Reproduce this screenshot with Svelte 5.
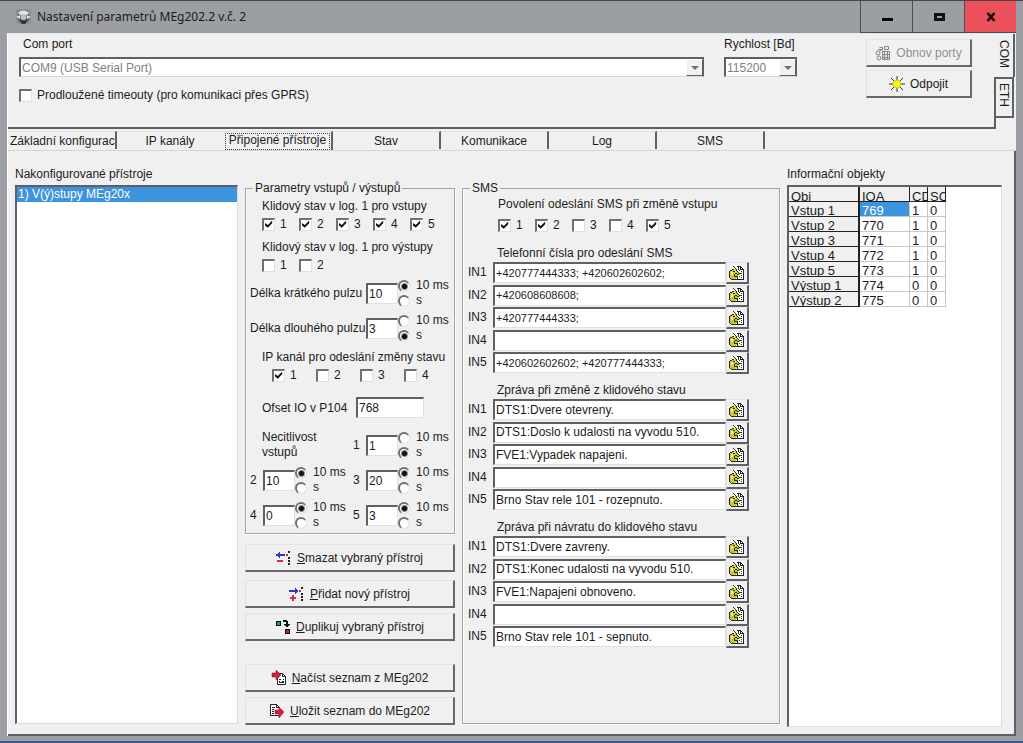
<script>
	const tabs = ['Základní konfigurace', 'IP kanály', 'Připojené přístroje', 'Stav', 'Komunikace', 'Log', 'SMS'];
	let activeTab = $state(2);

	let longTimeouts = $state(false);
	let offset = $state('768');

	let inputIdle = $state([true, true, true, true, true]);
	let outputIdle = $state([false, false]);
	let ipChannels = $state([true, false, false, false]);
	let smsEnabled = $state([true, true, false, false, true]);

	let shortPulse = $state({ value: '10', unit: 'ms' });
	let longPulse = $state({ value: '3', unit: 's' });
	let deadTimes = $state([
		{ value: '1', unit: 's' },
		{ value: '10', unit: 'ms' },
		{ value: '20', unit: 'ms' },
		{ value: '0', unit: 'ms' },
		{ value: '3', unit: 'ms' }
	]);

	const units = [
		['ms', '10 ms'],
		['s', 's']
	];

	let smsGroups = $state([
		{
			id: 'phone',
			title: 'Telefonní čísla pro odeslání SMS',
			rows: ['+420777444333; +420602602602;', '+420608608608;', '+420777444333;', '', '+420602602602; +420777444333;']
		},
		{
			id: 'change',
			title: 'Zpráva při změně z klidového stavu',
			rows: ['DTS1:Dvere otevreny.', 'DTS1:Doslo k udalosti na vyvodu 510.', 'FVE1:Vypadek napajeni.', '', 'Brno Stav rele 101 - rozepnuto.']
		},
		{
			id: 'return',
			title: 'Zpráva při návratu do klidového stavu',
			rows: ['DTS1:Dvere zavreny.', 'DTS1:Konec udalosti na vyvodu 510.', 'FVE1:Napajeni obnoveno.', '', 'Brno Stav rele 101 - sepnuto.']
		}
	]);

	const objects = [
		['Vstup 1', 769, 1, 0],
		['Vstup 2', 770, 1, 0],
		['Vstup 3', 771, 1, 0],
		['Vstup 4', 772, 1, 0],
		['Vstup 5', 773, 1, 0],
		['Výstup 1', 774, 0, 0],
		['Výstup 2', 775, 0, 0]
	];
</script>

{#snippet checks(list, kind)}
	<div class="checks {kind}">
		{#each list as checked, i}
			<label><input type="checkbox" {checked} onchange={() => (list[i] = !list[i])} />{i + 1}</label>
		{/each}
	</div>
{/snippet}

{#snippet duration(item, id, text)}
	<div class="duration">
		<label class="duration-name" for={id}>{text}</label>
		<input class="field short" {id} type="text" value={item.value} oninput={(e) => (item.value = e.currentTarget.value)} />
		<div class="units">
			{#each units as [unit, name] (unit)}
				<label>
					<input type="radio" name="{id}-unit" value={unit} checked={item.unit === unit} onchange={() => (item.unit = unit)} />
					{name}
				</label>
			{/each}
		</div>
	</div>
{/snippet}

{#snippet editIcon()}
	<svg width="16" height="16" viewBox="0 0 16 16" shape-rendering="crispEdges">
		<path d="M7 1h5l3 3v11H7z" fill="#fff" />
		<path d="M8 1h4v1H8zM12 2h1v1h-1zM13 3h1v1h-1zM14 4h1v11h-1zM11 2h1v3h-1zM12 4h2v1h-2zM7 14h8v1H7z" fill="#222" />
		<path d="M10 5h1v1h-1zM12 6h1v1h-1zM11 8h2v1h-2zM12 10h1v1h-1zM10 11h1v1h-1zM12 12h1v1h-1z" fill="#333" />
		<path d="M1 6h2V5h3V4h2v3h2v2h1v1H9v3H7v1H2v-1H1z" fill="#c8c832" />
		<path d="M0 6h1v7H0zM1 5h2v1H1zM3 4h2v1H3zM1 13h1v1H1zM2 14h6v1H2zM8 12h1v2H8zM4 1h1v1H4zM5 2h1v1H5zM6 3h1v1H6zM7 4h1v2H7zM8 6h1v1H8zM9 7h1v1H9zM10 8h1v1h-1zM10 9h-2v1h2zM6 8h2v1H6zM6 11h3v1H6zM9 2h1v3H9zM5 9h1v3H5zM4 6h2v1H4z" fill="#2c2c10" />
		<path d="M2 7h2v3H2zM6 6h1v1H6z" fill="#f4f478" />
	</svg>
{/snippet}

<div class="window">
	<header class="titlebar">
		<svg class="app-icon" width="18" height="18" viewBox="0 0 18 18">
			<rect x="1" y="1" width="15" height="15" rx="3" fill="#8a8c8e" />
			<circle cx="8.500" cy="9" r="6" fill="#4b5258" />
			<path d="M3 5q5-5 11 0l-2 2H5z" fill="#e0e3e5" />
			<path d="M1 9l4-2v4zM16 9l-4-2v4z" fill="#dde1e4" />
			<circle cx="8.500" cy="9" r="3" fill="#b8c0c4" />
			<path d="M5 13h7l-2 3H7z" fill="#2c3236" />
		</svg>
		<h1>Nastavení parametrů MEg202.2 v.č. 2</h1>
		<div class="window-buttons">
			<button type="button" aria-label="Minimalizovat">
				<svg width="12" height="12" viewBox="0 0 12 12"><path d="M1 7h11v3H1z" /></svg>
			</button>
			<button type="button" aria-label="Maximalizovat">
				<svg width="12" height="12" viewBox="0 0 12 12"><path d="M2.500 3.500h8v5h-8z" fill="none" stroke="#111" stroke-width="3" /></svg>
			</button>
			<button type="button" class="close" aria-label="Zavřít">
				<svg width="12" height="12" viewBox="0 0 12 12"><path d="M2.500 2l7 8M9.500 2l-7 8" stroke="#111" stroke-width="2.600" /></svg>
			</button>
		</div>
	</header>

	<main>
		<section class="connection">
			<div class="connection-body">
				<div class="port">
					<label for="port">Com port</label>
					<div class="combo">
						<select id="port" disabled><option>COM9 (USB Serial Port)</option></select>
						<span class="arrow"></span>
					</div>
					<label class="timeouts"><input type="checkbox" bind:checked={longTimeouts} />Prodloužené timeouty (pro komunikaci přes GPRS)</label>
				</div>
				<div class="speed">
					<label for="speed">Rychlost [Bd]</label>
					<div class="combo">
						<select id="speed" disabled><option>115200</option></select>
						<span class="arrow"></span>
					</div>
				</div>
				<div class="connection-buttons">
					<button type="button" class="push" disabled>
						<svg width="16" height="16" viewBox="0 0 16 16" fill="none" stroke="#858585">
							<path d="M4.500 2.500h3v3M9.500 1.500h4v3h-4zM3 4.500h4M7.500 6.500h7v8h-7zM9.500 6v9M12.500 6v9M7 9.500h8M7 12.500h8M4 7l4-4" />
							<circle cx="3" cy="8" r="2" /><circle cx="4" cy="13" r="2" />
						</svg>
						Obnov porty
					</button>
					<button type="button" class="push">
						<svg width="16" height="16" viewBox="0 0 16 16">
							<path d="M8 0v4M8 12v4M0 8h4M12 8h4M2 2l3.500 3.500M14 2l-3.500 3.500M2 14l3.500-3.500M14 14l-3.500-3.500" stroke="#3c3c10" />
							<circle cx="8" cy="8" r="3.800" fill="#f8f810" stroke="#c0c000" stroke-width="0.800" />
						</svg>
						Odpojit
					</button>
				</div>
			</div>
			<nav class="side-tabs">
				<button type="button" class="com">COM</button>
				<button type="button" class="eth">ETH</button>
				<span class="side-edge"></span>
			</nav>
		</section>

		<nav class="tabs">
			{#each tabs as tab, i (tab)}
				<button type="button" class:active={activeTab === i} onclick={() => (activeTab = i)}><span>{tab}</span></button>
			{/each}
		</nav>

		<section class="page">
			<div class="devices">
				<h2>Nakonfigurované přístroje</h2>
				<ul class="sunken">
					<li>1) V(ý)stupy MEg20x</li>
				</ul>
			</div>

			<div class="middle">
				<fieldset class="params">
					<legend>Parametry vstupů / výstupů</legend>
					<h3>Klidový stav v log. 1 pro vstupy</h3>
					{@render checks(inputIdle, 'io')}
					<h3 class="spaced">Klidový stav v log. 1 pro výstupy</h3>
					{@render checks(outputIdle, 'io')}
					<div class="pulses">
						{@render duration(shortPulse, 'short-pulse', 'Délka krátkého pulzu')}
						{@render duration(longPulse, 'long-pulse', 'Délka dlouhého pulzu')}
					</div>
					<h3>IP kanál pro odeslání změny stavu</h3>
					{@render checks(ipChannels, 'channels')}
					<div class="offset">
						<label for="offset">Ofset IO v P104</label>
						<input class="field" id="offset" type="text" bind:value={offset} />
					</div>
					<div class="dead-times">
						<p>Necitlivost<br />vstupů</p>
						{#each deadTimes as item, i}
							{@render duration(item, `dead-${i + 1}`, i + 1)}
						{/each}
					</div>
				</fieldset>

				<div class="actions">
					<button type="button" class="push">
						<svg width="16" height="16" viewBox="0 0 16 16" shape-rendering="crispEdges">
							<path d="M0 4h9v2H0zM3 2h1v6H3zM2 3h1v4H2z" fill="#3434c4" />
							<path d="M1 10h6v2H1z" fill="#e02840" />
							<path d="M12 1h2v2h-2zM12 7h2v2h-2zM12 10h2v2h-2zM12 13h2v2h-2z" fill="#222" />
							<path d="M10 4h2v2h-2z" fill="#c03040" />
						</svg>
						<span><u>S</u>mazat vybraný přístroj</span>
					</button>
					<button type="button" class="push">
						<svg width="16" height="16" viewBox="0 0 16 16" shape-rendering="crispEdges">
							<path d="M0 4h9v2H0zM6 2h1v6H6zM7 3h1v4H7z" fill="#3434c4" />
							<path d="M1 11h6v2H1zM3 9h2v6H3z" fill="#e02840" />
							<path d="M12 1h2v2h-2zM12 7h2v2h-2zM12 10h2v2h-2zM12 13h2v2h-2z" fill="#222" />
							<path d="M10 4h2v2h-2z" fill="#c03040" />
						</svg>
						<span><u>P</u>řidat nový přístroj</span>
					</button>
					<button type="button" class="push">
						<svg width="16" height="16" viewBox="0 0 16 16" shape-rendering="crispEdges">
							<path d="M1 2h5v5H1zM10 10h5v5h-5z" fill="#111" />
							<path d="M2 3h3v3H2z" fill="#209a8c" />
							<path d="M11 11h3v3h-3z" fill="#b02838" />
							<path d="M8 1h4v1h1v3h2v1h-1v1h-1v1h-1V8h-1V7h-1V6h-1V5h2V3H8z" fill="#111" />
						</svg>
						<span><u>D</u>uplikuj vybraný přístroj</span>
					</button>
					<button type="button" class="push apart">
						<svg width="16" height="16" viewBox="0 0 16 16">
							<path d="M6.500 3.500h5l3 3v8h-8z" fill="#fff" stroke="#222" />
							<path d="M11.500 3.500v3h3M8 9.500h2M12 9.500h1M8 11.500h1M11 11.500h2M8 12.500h5" stroke="#222" fill="none" />
							<path d="M1 3h4V0l5 5-5 5V7H1z" fill="#dc1c34" stroke="#801020" stroke-width="0.500" />
						</svg>
						<span><u>N</u>ačíst seznam z MEg202</span>
					</button>
					<button type="button" class="push">
						<svg width="16" height="16" viewBox="0 0 16 16">
							<path d="M1.500 1.500h6l3 3v8h-9z" fill="#fff" stroke="#222" />
							<path d="M7.500 1.500v3h3M3 4.500h3M3 6.500h2M3 8.500h2M3 10.500h2" stroke="#222" fill="none" />
							<path d="M6 7h4V4l5 5-5 6v-4H6z" fill="#dc1c34" stroke="#801020" stroke-width="0.500" />
						</svg>
						<span><u>U</u>ložit seznam do MEg202</span>
					</button>
				</div>
			</div>

			<fieldset class="sms">
				<legend>SMS</legend>
				<h3>Povolení odeslání SMS při změně vstupu</h3>
				{@render checks(smsEnabled, 'io')}
				{#each smsGroups as group (group.id)}
					<div class="sms-group">
						<h4>{group.title}</h4>
						<div class="sms-rows">
							{#each group.rows as _, i}
								<div class="sms-row">
									<label for="{group.id}-{i}">IN{i + 1}</label>
									<input class="field" class:digits={group.id === 'phone'} id="{group.id}-{i}" type="text" bind:value={group.rows[i]} />
									<button type="button" class="edit" aria-label="Upravit IN{i + 1}">{@render editIcon()}</button>
								</div>
							{/each}
						</div>
					</div>
				{/each}
			</fieldset>

			<div class="objects">
				<h2>Informační objekty</h2>
				<div class="sunken">
					<table>
						<thead>
							<tr>
								<th class="name"><div>Obj</div></th>
								<th class="ioa"><div>IOA</div></th>
								<th class="flag"><div>CD</div></th>
								<th class="flag"><div>SC</div></th>
							</tr>
						</thead>
						<tbody>
							{#each objects as [name, ioa, cd, sc], i (ioa)}
								<tr>
									<th><div>{name}</div></th>
									<td class:selected={i === 0}><div>{ioa}</div></td>
									<td><div>{cd}</div></td>
									<td><div>{sc}</div></td>
								</tr>
							{/each}
						</tbody>
					</table>
				</div>
			</div>
		</section>
	</main>
</div>

<style>
	:global(body) {
		margin: 0;
	}

	.window {
		box-sizing: border-box;
		min-height: 100vh;
		display: flex;
		flex-direction: column;
		padding: 0 7px 5px;
		background: #9b9ea3;
		border-top: 1px solid #44464c;
		border-bottom: 2px solid #3c5a8c;
		font-family: 'Liberation Sans', Arial, sans-serif;
		font-size: 12px;
		line-height: 16px;
		color: #1c1c1c;
	}

	.window :global(*) {
		box-sizing: border-box;
	}

	button,
	input,
	select {
		font: inherit;
		color: inherit;
		margin: 0;
		border-radius: 0;
	}

	button {
		padding: 0;
		background: #f0f0f0;
	}

	h1,
	h2,
	h3,
	h4,
	p,
	ul {
		margin: 0;
		padding: 0;
		font-size: 12px;
		font-weight: normal;
	}

	/* title bar */
	.titlebar {
		display: flex;
		align-items: center;
		height: 32px;
		padding-left: 8px;
	}

	.titlebar h1 {
		flex: 1;
		padding-left: 4px;
		font-family: 'Noto Sans', 'Open Sans', sans-serif;
		font-size: 12px;
	}

	.window-buttons {
		display: flex;
		align-self: stretch;
	}

	.window-buttons button {
		display: flex;
		align-items: center;
		justify-content: center;
		width: 52px;
		background: #9b9ea3;
		border: 1px solid #4c4e54;
		border-width: 0 0 1px 1px;
	}

	.window-buttons .close {
		background: #ec505a;
	}

	main {
		flex: 1;
		display: flex;
		flex-direction: column;
		background: #f0f0f0;
		border-top: 1px solid #dce8ee;
		border-left: 1px solid #fff;
	}

	/* connection panel */
	.connection {
		display: flex;
		height: 95px;
	}

	.connection-body {
		flex: 1;
		display: flex;
		gap: 20px;
		padding: 2px 22px 0 11px;
		border-bottom: 2px solid #606064;
	}

	.port {
		flex: 1;
	}

	.port > label,
	.speed > label {
		display: block;
		padding-left: 4px;
	}

	.speed {
		width: 73px;
		white-space: nowrap;
	}

	.speed > label {
		padding-left: 0;
	}

	.combo {
		display: flex;
		height: 20px;
		margin-top: 5px;
		background: #fff;
		border: 2px solid #606064;
		border-right-width: 1px;
		border-bottom: 1px solid #d8d8d8;
	}

	.combo select {
		flex: 1;
		min-width: 0;
		padding: 0 1px;
		appearance: none;
		background: #fff;
		border: 0;
		color: #808080;
		opacity: 1;
		font-size: 12px;
		line-height: 16px;
	}

	.arrow {
		display: flex;
		align-items: center;
		justify-content: center;
		width: 17px;
		background: #f0f0f0;
		border: 1px solid #fff;
		border-right-color: #606064;
		border-bottom-color: #606064;
	}

	.arrow::before {
		content: '';
		border: 4px solid transparent;
		border-top-color: #707070;
		border-bottom-width: 0;
	}

	.port .timeouts {
		display: flex;
		align-items: center;
		gap: 5px;
		margin-top: 10px;
		padding-left: 0;
	}

	.connection-buttons {
		display: flex;
		flex-direction: column;
		gap: 3px;
		width: 106px;
		margin: 3px 0 0 49px;
	}

	.push {
		display: flex;
		align-items: center;
		justify-content: center;
		gap: 5px;
		width: 100%;
		height: 28px;
		border: 1px solid #e2e2e2;
		border-right: 2px solid #68686c;
		border-bottom: 2px solid #68686c;
	}

	.push:disabled {
		color: #909090;
	}

	.side-tabs {
		display: flex;
		flex-direction: column;
		width: 22px;
	}

	.side-tabs button {
		width: 21px;
		height: 41px;
		writing-mode: vertical-rl;
		line-height: 16px;
		font-size: 12px;
		border: 0;
		border-right: 2px solid #606064;
	}

	.side-tabs .com {
		height: 43px;
		padding-bottom: 4px;
	}

	.side-tabs .eth {
		width: 20px;
		padding-bottom: 6px;
		border: 2px solid #606064;
	}

	.side-edge {
		flex: 1;
		border-left: 2px solid #606064;
	}

	/* page tabs */
	.tabs {
		display: flex;
		height: 22px;
		padding: 2px 0 0 1px;
		border-bottom: 1px solid #d4d4d4;
	}

	.tabs button {
		width: 108px;
		height: 18px;
		overflow: hidden;
		white-space: nowrap;
		border: 0;
		border-top: 1px solid #e2e2e2;
		border-right: 2px solid #606064;
	}

	.tabs button:first-child {
		text-align: left;
		padding-left: 1px;
	}

	.tabs button:nth-child(2) {
		border-right-color: #f0f0f0;
	}

	.tabs .active {
		height: 19px;
	}

	.tabs .active span {
		display: block;
		margin-right: 1px;
		padding-bottom: 2px;
		line-height: 15px;
		outline: 1px dotted #444;
		outline-offset: -1px;
	}

	.page {
		flex: 1;
		display: grid;
		grid-template-columns: 223px 210px 1fr 215px;
		gap: 7px;
		padding: 13px 12px 7px 7px;
		border-right: 2px solid #606064;
		border-bottom: 2px solid #606064;
	}

	.devices,
	.objects {
		display: flex;
		flex-direction: column;
	}

	.devices {
		padding-bottom: 3px;
	}

	h2 {
		height: 21px;
		line-height: 20px;
	}

	.sunken {
		flex: 1;
		background: #fff;
		border: 1px solid #dcdcdc;
		border-top: 2px solid #606064;
		border-left: 2px solid #606064;
	}

	.sunken li {
		list-style: none;
		padding-left: 1px;
		line-height: 15px;
		color: #fff;
		background: #3c94dc;
	}

	/* group boxes */
	.middle {
		padding-top: 17px;
	}

	fieldset {
		min-width: 0;
		margin: 0;
		padding: 0 4px;
		border: 1px solid #a4a4a8;
		box-shadow:
			1px 1px 0 #fff,
			inset 1px 0 0 #fff;
	}

	legend {
		margin-left: 3px;
		padding: 0 2px;
		line-height: 14px;
		white-space: nowrap;
	}

	.params h3 {
		margin-top: 3px;
		padding-left: 12px;
		white-space: nowrap;
	}

	.params .spaced {
		margin-top: 8px;
	}

	.checks {
		display: grid;
		grid-template-columns: repeat(5, 37px);
		margin-top: 3px;
		padding-left: 12px;
		line-height: 14px;
	}

	.checks.channels {
		grid-template-columns: repeat(4, 44px);
		padding-left: 22px;
	}

	.checks label,
	.units label {
		display: flex;
		align-items: center;
		gap: 5px;
	}

	input[type='checkbox'] {
		appearance: none;
		flex: none;
		width: 13px;
		height: 13px;
		background: #fff;
		border: 1px solid #e0e0e0;
		border-top: 2px solid #707074;
		border-left: 2px solid #707074;
	}

	input[type='checkbox']:checked::before {
		content: '';
		display: block;
		width: 8px;
		height: 8px;
		margin: 1px;
		background: #111;
		clip-path: polygon(0 30%, 35% 55%, 90% 0, 90% 35%, 35% 90%, 0 62%);
	}

	.field {
		min-width: 0;
		height: 21px;
		padding: 0 1px;
		background: #fff;
		border: 1px solid #e0e0e0;
		border-top: 2px solid #606064;
		border-left: 2px solid #606064;
	}

	.pulses {
		display: grid;
		gap: 5px;
		margin: 6px 0;
	}

	.duration {
		display: flex;
		align-items: center;
	}

	.duration-name {
		width: 13px;
		white-space: nowrap;
	}

	.pulses .duration-name {
		width: 116px;
	}

	.short {
		width: 32px;
	}

	.units label {
		gap: 6px;
		height: 15px;
		line-height: 15px;
		white-space: nowrap;
	}

	input[type='radio'] {
		appearance: none;
		width: 12px;
		height: 12px;
		background: #fff;
		border: 1px solid #e0e0e0;
		border-top: 2px solid #707074;
		border-left: 2px solid #707074;
		border-radius: 50%;
	}

	input[type='radio']:checked {
		background: radial-gradient(circle, #111 2px, #fff 4px);
	}

	.offset {
		display: flex;
		align-items: center;
		margin-top: 15px;
		padding-left: 12px;
	}

	.offset label {
		width: 94px;
	}

	.offset .field {
		width: 68px;
	}

	.dead-times {
		display: grid;
		grid-template-columns: 103px 1fr;
		gap: 5px 0;
		margin: 12px 0 3px;
	}

	.dead-times p {
		padding-left: 12px;
		line-height: 15px;
	}

	.actions {
		display: grid;
		gap: 5px;
		margin-top: 10px;
	}

	.actions .push:first-child {
		margin-bottom: 3px;
	}

	.actions .apart {
		margin-top: 18px;
	}

	/* sms */
	.sms {
		margin: 17px 0 3px;
	}

	.sms h3,
	.sms .checks {
		padding-left: 31px;
	}

	.sms h3 {
		padding-top: 1px;
	}

	.sms .checks {
		margin: 6px 0 12px;
	}

	.sms-group {
		margin: 0 26px 7px 1px;
	}

	.sms h4 {
		padding-left: 29px;
		line-height: 18px;
	}

	.sms-rows {
		display: flex;
		flex-direction: column;
		justify-content: space-between;
		height: 112px;
	}

	.sms-row {
		display: grid;
		grid-template-columns: 25px 1fr 23px;
		height: 22px;
		line-height: 21px;
	}

	.digits {
		font-size: 11px;
	}

	.edit {
		display: flex;
		align-items: center;
		justify-content: center;
		border: 1px solid #e2e2e2;
		border-right: 2px solid #606064;
		border-bottom: 2px solid #606064;
	}

	/* information objects */
	table {
		table-layout: fixed;
		width: 157px;
		border-collapse: separate;
		border-spacing: 0;
		font-size: 13px;
	}

	th,
	td {
		padding: 0;
		font-weight: normal;
		text-align: left;
		border: 1px solid #c8c8c8;
		border-width: 0 1px 1px 0;
	}

	th {
		background: #f0f0f0;
		border-color: #222;
	}

	tbody th {
		border-right-width: 2px;
	}

	.name {
		width: 71px;
		border-right-width: 2px;
	}

	.ioa {
		width: 50px;
	}

	.flag {
		width: 18px;
	}

	/* rows are shorter than the text, so descenders get cut */
	th div,
	td div {
		height: 14px;
		padding: 1px 0 0 2px;
		line-height: 15px;
		overflow: hidden;
	}

	thead div {
		padding-top: 2px;
	}

	.selected {
		color: #fff;
		background: #3c94dc;
	}
</style>
